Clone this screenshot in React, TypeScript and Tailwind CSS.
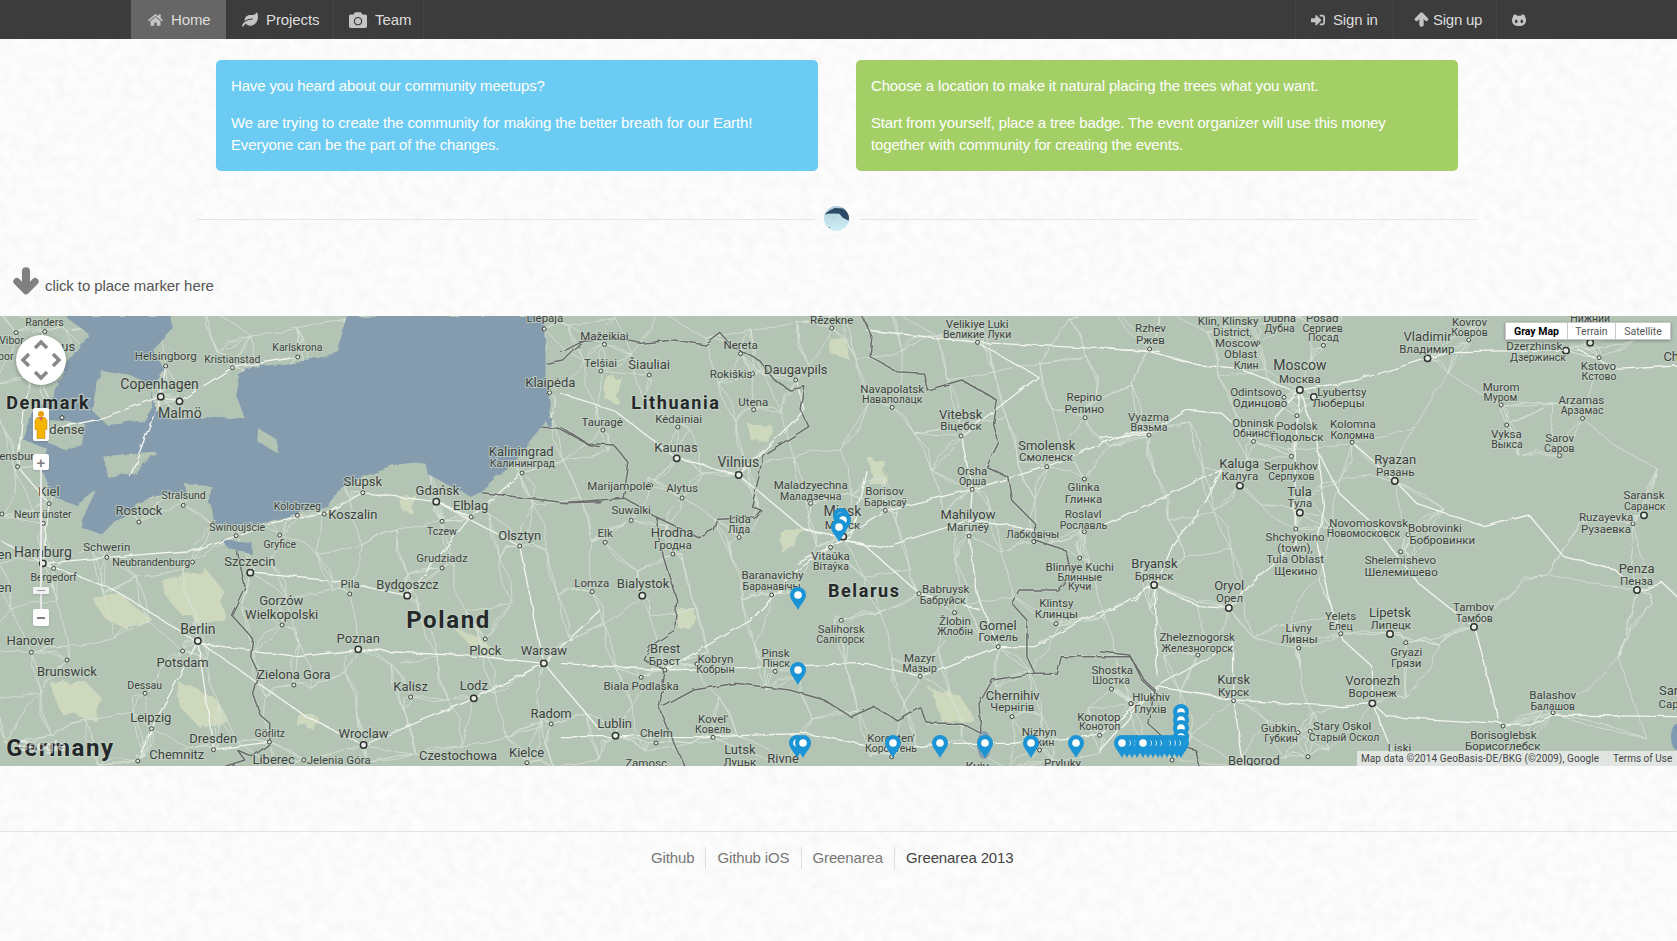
import { FaHome, FaLeaf, FaCamera, FaSignInAlt } from 'react-icons/fa';

type Crop = 'a' | 'b' | 'c';

// map data was read off three crops, so points are kept in crop coordinates
const OX: Record<Crop, number> = { a: 0, b: 560, c: 1100 };
const FX: Record<Crop, number> = { a: 2.613, b: 2.613, c: 2.717 };
const px = (c: Crop, x: number) => OX[c] + x / FX[c];
const py = (y: number) => 310 + y / 3;

const line = (c: Crop, p: number[], close = false) => {
  let d = '';
  for (let i = 0; i < p.length; i += 2) {
    d += `${i ? 'L' : 'M'}${px(c, p[i]).toFixed(1)} ${py(p[i + 1]).toFixed(1)}`;
  }
  return close ? d + 'Z' : d;
};

const A = 14;
const B = 13;
const C = 11.5;
const D = 10.5;

const LABELS: Record<Crop, [string, number, number, number][]> = {
  a: [
    ['Randers', 116, 36, D], ['Vibor', 30, 92, D], ['Aarhus', 143, 108, B], ['bor', 15, 138, D], ['Helsingborg', 433, 138, C],
    ['Karlskrona', 777, 113, D], ['Kristianstad', 607, 147, D], ['Copenhagen', 417, 222, A], ['Malmö', 470, 310, A], ['Odense', 163, 358, B],
    ['Klaipėda', 1438, 217, B], ['Liepaja', 1424, 25, C], ['Kaliningrad', 1362, 424, B], ['Калининград', 1365, 460, D], ['Slupsk', 948, 513, B],
    ['Gdańsk', 1143, 540, B], ['Elblag', 1230, 586, B], ['Koszalin', 922, 612, B], ['Kolobrzeg', 777, 588, D], ['Stralsund', 480, 557, D],
    ['Rostock', 363, 600, B], ['Kiel', 128, 545, B], ['Neumünster', 112, 612, D], ['Flensburg', 40, 438, C], ['Świnoujście', 620, 651, D],
    ['Gryfice', 731, 702, D], ['Tczew', 1155, 663, D], ['Olsztyn', 1358, 676, B], ['Grudziadz', 1155, 744, C], ['Schwerin', 279, 711, C],
    ['Neubrandenburg', 395, 756, D], ['Hamburg', 112, 725, A], ['Szczecin', 653, 753, B], ['Bergedorf', 140, 801, D], ['Pila', 915, 822, C],
    ['Bydgoszcz', 1065, 823, B], ['Gorzów', 735, 870, B], ['Wielkopolski', 736, 912, B], ['Hanover', 80, 991, B], ['Berlin', 517, 958, A],
    ['Poznan', 936, 985, B], ['Plock', 1268, 1020, B], ['Warsaw', 1421, 1021, B], ['Potsdam', 477, 1057, B], ['Brunswick', 175, 1083, B],
    ['Zielona Gora', 768, 1092, B], ['Dessau', 378, 1125, D], ['Kalisz', 1073, 1128, B], ['Lodz', 1238, 1127, B], ['Radom', 1440, 1210, B],
    ['Leipzig', 394, 1222, B], ['Dresden', 557, 1284, B], ['Görlitz', 705, 1270, D], ['Wroclaw', 950, 1270, B], ['Chemnitz', 462, 1332, B],
    ['Liberec', 715, 1348, B], ['Jelenia Góra', 885, 1349, C], ['Czestochowa', 1197, 1335, B], ['Kielce', 1376, 1327, B], ['en', 12, 732, B], ['en', 12, 832, B],
  ],
  b: [
    ['Rēzekne', 710, 30, C], ['Velikiye Luki', 1090, 42, C], ['Великие Луки', 1090, 72, D], ['Mažeikiai', 116, 77, C], ['Nereta', 472, 105, C],
    ['Telšiai', 106, 158, C], ['Šiauliai', 233, 162, B], ['Rokiškis', 447, 191, C], ['Daugavpils', 616, 178, B], ['Navapolatsk', 868, 237, C],
    ['Наваполацк', 868, 268, D], ['Utena', 505, 276, C], ['Repino', 1370, 262, C], ['Репино', 1370, 297, C], ['Kėdainiai', 310, 327, C],
    ['Tauragė', 110, 336, C], ['Vitebsk', 1047, 312, B], ['Віцебск', 1048, 348, C], ['Kaunas', 303, 412, B], ['Smolensk', 1272, 405, B],
    ['Смоленск', 1270, 441, C], ['Vilnius', 466, 457, A], ['Orsha', 1077, 483, C], ['Орша', 1078, 514, D], ['Maladzyechna', 655, 525, C],
    ['Маладзечна', 655, 558, D], ['Borisov', 848, 543, C], ['Барысаў', 850, 577, D], ['Glinka', 1368, 530, C], ['Глинка', 1368, 567, C],
    ['Marijampolė', 155, 528, C], ['Alytus', 319, 534, C], ['Suwalki', 186, 600, C], ['Minsk', 738, 604, A], ['Минск', 738, 645, C],
    ['Roslavl', 1367, 612, C], ['Рославль', 1368, 646, D], ['Mahilyow', 1066, 613, B], ['Магілёў', 1066, 651, C], ['Lida', 470, 627, C],
    ['Ліда', 468, 658, D], ['Elk', 118, 669, C], ['Hrodna', 293, 667, B], ['Гродна', 295, 705, C], ['Лабковічы', 1235, 672, D],
    ['Vitaŭka', 707, 738, C], ['Вітаўка', 708, 768, D], ['Blinnye Kuchi', 1358, 771, C], ['Блинные', 1358, 801, D], ['Кучи', 1358, 828, D],
    ['Baranavichy', 555, 796, C], ['Баранавічы', 553, 828, D], ['Lomza', 83, 820, C], ['Bialystok', 217, 820, B], ['Babruysk', 1008, 837, C],
    ['Бабруйск', 1000, 870, D], ['Klintsy', 1297, 879, C], ['Клинцы', 1297, 912, C], ['Žlobin', 1032, 932, C], ['Жлобін', 1032, 963, D],
    ['Gomel', 1144, 945, B], ['Гомель', 1145, 982, C], ['Salihorsk', 735, 957, C], ['Салігорск', 733, 988, D], ['Brest', 275, 1015, B],
    ['Брэст', 273, 1053, C], ['Kobryn', 406, 1047, C], ['Кобрын', 406, 1077, D], ['Pinsk', 563, 1028, C], ['Пінск', 565, 1060, D],
    ['Mazyr', 940, 1044, C], ['Мазыр', 940, 1075, D], ['Shostka', 1443, 1080, C], ['Шостка', 1440, 1112, D], ['Biala Podlaska', 212, 1128, C],
    ['Chernihiv', 1183, 1155, B], ['Чернігів', 1182, 1191, C], ["Kovel'", 400, 1227, C], ['Ковель', 400, 1257, D], ['Lublin', 143, 1240, B],
    ['Chelm', 252, 1270, C], ['Konotop', 1408, 1221, C], ['Конотоп', 1410, 1250, D], ['Nizhyn', 1252, 1266, C], ['Ніжин', 1252, 1296, D],
    ["Korosten'", 865, 1284, C], ['Коростень', 865, 1315, D], ['Lutsk', 470, 1318, B], ['Луцьк', 470, 1356, C], ['Rivne', 583, 1345, B],
    ['Zamosc', 225, 1358, C], ['Pryluky', 1313, 1358, C], ['Kyiv', 1090, 1368, B],
  ],
  c: [
    ['Rzhev', 137, 53, C], ['Ржев', 137, 90, C], ['Klin, Klinsky', 348, 33, C], ['District,', 360, 66, C], ['Moscow', 372, 99, C], ['Oblast', 382, 132, C],
    ['Клин', 397, 165, D], ['Dubna', 488, 25, C], ['Дубна', 488, 54, D], ['Posad', 604, 25, C], ['Сергиев', 605, 54, D], ['Посад', 607, 81, D],
    ['Kovrov', 1004, 36, C], ['Ковров', 1004, 67, D], ['Vladimir', 890, 78, B], ['Владимир', 888, 117, C], ['Moscow', 543, 166, A], ['Москва', 543, 207, C],
    ['Dzerzhinsk', 1180, 107, C], ['Дзержинск', 1190, 142, D], ['Kstovo', 1354, 168, C], ['Кстово', 1356, 198, D], ['Odintsovo', 424, 246, C],
    ['Одинцово', 435, 279, C], ['Lyubertsy', 657, 246, C], ['Люберцы', 648, 279, C], ['Murom', 1090, 231, C], ['Муром', 1088, 262, D],
    ['Arzamas', 1308, 271, C], ['Арзамас', 1310, 300, D], ['Vyazma', 132, 322, C], ['Вязьма', 133, 352, D], ['Obninsk', 416, 339, C],
    ['Обнинск', 418, 369, D], ['Podolsk', 535, 348, C], ['Подольск', 535, 381, C], ['Kolomna', 687, 342, C], ['Коломна', 686, 375, D],
    ['Vyksa', 1104, 372, C], ['Выкса', 1106, 402, D], ['Sarov', 1249, 384, C], ['Саров', 1248, 414, D], ['Ryazan', 802, 448, B], ['Рязань', 802, 487, C],
    ['Kaluga', 378, 460, B], ['Калуга', 380, 497, C], ['Serpukhov', 519, 468, C], ['Серпухов', 520, 498, D], ['Tula', 542, 543, B], ['Тула', 543, 579, C],
    ['Saransk', 1478, 555, C], ['Саранск', 1480, 589, D], ['Novomoskovsk', 730, 639, C], ['Новомосковск', 716, 670, D], ['Ruzayevka', 1375, 621, C],
    ['Рузаевка', 1375, 657, C], ['Bobrovinki', 910, 654, C], ['Бобровинки', 930, 690, C], ['Shchyokino', 530, 681, C], ['(town),', 530, 714, C],
    ['Tula Oblast', 530, 747, C], ['Щекино', 532, 783, C], ['Shelemishevo', 816, 750, C], ['Шелемишево', 818, 786, C], ['Penza', 1458, 775, B],
    ['Пенза', 1458, 814, C], ['Bryansk', 148, 760, B], ['Брянск', 147, 798, C], ['Oryol', 351, 826, B], ['Орел', 352, 864, C], ['Tambov', 1015, 890, C],
    ['Тамбов', 1017, 924, D], ['Yelets', 654, 918, C], ['Елец', 654, 948, D], ['Lipetsk', 788, 906, B], ['Липецк', 790, 945, C], ['Livny', 540, 954, C],
    ['Ливны', 541, 987, C], ['Zheleznogorsk', 264, 981, C], ['Железногорск', 264, 1015, D], ['Gryazi', 832, 1026, C], ['Грязи', 832, 1060, C],
    ['Kursk', 363, 1107, B], ['Курск', 363, 1147, C], ['Voronezh', 741, 1110, B], ['Воронеж', 741, 1150, C], ['Balashov', 1230, 1155, C],
    ['Балашов', 1230, 1188, D], ['Sar', 1545, 1140, B], ['Сар', 1545, 1182, C], ['Gubkin', 485, 1254, C], ['Губкин', 492, 1284, D], ['Stary Oskol', 658, 1248, C],
    ['Старый Оскол', 663, 1281, D], ['Borisoglebsk', 1096, 1275, C], ['Борисоглебск', 1094, 1308, C], ['Liski', 814, 1313, C], ['Belgorod', 418, 1350, B],
    ['Hlukhiv', 139, 1160, C], ['Глухів', 137, 1197, C], ['Нижний', 1332, 25, D], ['Ch', 1552, 138, B],
  ],
};

const COUNTRIES: [string, Crop, number, number, number][] = [
  ['Denmark', 'a', 126, 277, 18],
  ['Poland', 'a', 1172, 930, 24],
  ['Germany', 'a', 158, 1315, 24],
  ['Lithuania', 'b', 303, 277, 18],
  ['Belarus', 'b', 795, 842, 18],
];

// [x, y, big]
const DOTS: Record<Crop, [number, number, number?][]> = {
  a: [
    [420, 260, 1], [469, 274, 1], [112, 760, 1], [517, 993, 1], [654, 788, 1], [1140, 575, 1], [1421, 1060, 1], [1238, 1165, 1], [950, 1305, 1], [936, 1018, 1], [1064, 857, 1],
    [117, 65], [42, 68], [433, 168], [607, 173], [778, 141], [162, 323], [46, 470], [128, 581], [113, 640], [279, 742], [363, 636], [479, 586], [503, 756], [617, 677], [731, 675],
    [777, 616], [847, 612], [948, 548], [1155, 634], [1231, 621], [1364, 489], [1358, 708], [1155, 774], [914, 852], [737, 945], [140, 775], [82, 1027], [175, 1050], [477, 1023],
    [379, 1150], [396, 1256], [558, 1319], [704, 1296], [768, 1125], [1073, 1161], [1268, 987], [1440, 1242], [794, 1350], [1377, 1358], [1436, 248], [1422, 57], [360, 1353], [5, 612],
  ],
  b: [
    [467, 495, 1], [305, 445, 1], [740, 680, 1], [215, 857, 1], [145, 1277, 1],
    [116, 103], [107, 183], [233, 195], [472, 131], [503, 191], [616, 210], [710, 54], [1091, 97], [868, 292], [506, 299], [308, 351], [112, 360], [1372, 323], [1048, 378], [1272, 470],
    [1077, 538], [655, 580], [850, 601], [1370, 507], [237, 526], [319, 564], [186, 631], [118, 697], [468, 682], [295, 732], [1069, 678], [1370, 665], [1238, 695], [707, 712], [1358, 744],
    [553, 855], [84, 845], [938, 851], [1551, 826], [1031, 908], [735, 931], [1296, 941], [1145, 1010], [274, 1080], [358, 1062], [562, 1084], [941, 1099], [1441, 1137], [212, 1102],
    [1181, 1220], [1492, 1181], [400, 1282], [251, 1299], [1410, 1276], [1253, 1320], [867, 1340],
  ],
  c: [
    [543, 240, 1], [740, 1180, 1], [890, 145, 1], [801, 513, 1], [581, 261, 1], [1332, 98, 1], [1266, 122, 1], [380, 527, 1], [543, 608, 1], [147, 825, 1], [350, 894, 1], [1016, 951, 1], [788, 972, 1], [1478, 616, 1], [1459, 840, 1],
    [135, 117], [429, 98], [607, 106], [1002, 90], [1356, 143], [500, 262], [535, 317], [417, 394], [685, 397], [1090, 285], [1311, 325], [133, 375], [1105, 345], [1249, 437], [520, 439],
    [532, 657], [627, 654], [837, 674], [1448, 641], [817, 725], [654, 971], [831, 998], [540, 1014], [266, 1035], [363, 1172], [84, 1181], [1231, 1208], [1095, 1248], [538, 1268], [571, 1264], [565, 1340], [196, 1350],
  ],
};

const MAJOR_ROADS: [Crop, number[]][] = [
  ['a', [1421, 1060, 1260, 1040, 930, 1020, 780, 1040, 520, 1000, 300, 840, 112, 760, 0, 690]],
  ['a', [654, 788, 890, 815, 1064, 857, 1230, 620, 1140, 575, 948, 548, 847, 612, 700, 640, 520, 720, 279, 742, 112, 760]],
  ['a', [1421, 1060, 1240, 1165, 950, 1305, 800, 1220, 517, 993]],
  ['a', [1421, 1060, 1568, 900]],
  ['a', [1421, 1060, 1568, 1260]],
  ['a', [112, 760, 128, 581, 46, 470, 60, 300, 117, 65]],
  ['a', [120, 360, 250, 330, 420, 260, 469, 274, 607, 173, 778, 141]],
  ['a', [433, 168, 420, 260, 340, 500]],
  ['a', [517, 993, 396, 1256, 360, 1353]],
  ['a', [517, 993, 558, 1319, 704, 1296]],
  ['a', [1140, 575, 1358, 708, 1421, 1060]],
  ['a', [1364, 489, 1231, 621, 1140, 575]],
  ['b', [0, 250, 140, 300, 305, 445, 467, 495, 640, 660, 740, 680]],
  ['b', [467, 495, 640, 300, 616, 210]],
  ['b', [274, 1080, 500, 930, 620, 780, 735, 690, 790, 700, 940, 851, 1100, 900]],
  ['b', [740, 680, 850, 601, 1077, 538, 1272, 470, 1480, 370, 1568, 360]],
  ['b', [740, 690, 840, 715, 1069, 630, 1240, 660]],
  ['b', [1048, 378, 1077, 538, 1069, 678, 1090, 850, 1145, 1010]],
  ['b', [1145, 1010, 1240, 1010, 1380, 920, 1500, 870, 1568, 800]],
  ['b', [0, 1060, 274, 1080, 560, 1070, 800, 1060, 941, 1099, 1145, 1010]],
  ['b', [0, 1280, 400, 1280, 640, 1270, 870, 1320, 1000, 1300, 1181, 1300, 1410, 1276, 1568, 1130]],
  ['b', [1048, 378, 1250, 200, 1090, 97, 800, 60]],
  ['b', [1091, 97, 1568, 125]],
  ['b', [800, 480, 760, 680, 620, 760]],
  ['c', [0, 115, 135, 125, 270, 165, 380, 175, 520, 240]],
  ['c', [543, 240, 700, 210, 890, 145, 960, 125, 1270, 120]],
  ['c', [0, 385, 130, 370, 230, 300, 330, 310, 417, 394, 543, 240]],
  ['c', [543, 240, 590, 400, 610, 590, 590, 700, 620, 860, 660, 990, 740, 1070, 740, 1180]],
  ['c', [350, 894, 440, 790, 530, 700, 530, 440, 543, 240]],
  ['c', [0, 650, 330, 480, 290, 570, 200, 700, 150, 830, 155, 1100]],
  ['c', [590, 420, 650, 550, 740, 640, 865, 820, 1016, 951, 1085, 1230]],
  ['c', [685, 397, 800, 510, 860, 580, 1045, 650, 1165, 615, 1260, 740, 1400, 780, 1460, 840, 1530, 820, 1568, 860]],
  ['c', [363, 1170, 660, 1190, 740, 1180, 780, 1220, 1090, 1240, 1170, 1245, 1230, 1215, 1568, 1220]],
  ['c', [0, 920, 147, 825, 270, 890, 350, 894]],
  ['c', [1300, 120, 1400, 175, 1568, 165]],
  ['c', [155, 1130, 363, 1000, 363, 1170, 390, 1368]],
  ['c', [0, 1320, 155, 1130, 363, 1170]],
  ['c', [740, 1180, 810, 1368]],
];

const BORDERS: [Crop, number[]][] = [
  ['a', [620, 725, 640, 830, 605, 915, 660, 985, 655, 1040, 675, 1090, 660, 1150, 680, 1215, 705, 1240, 705, 1300, 660, 1340, 620, 1320, 640, 1350, 590, 1368]],
  ['a', [1260, 548, 1480, 578, 1568, 575]],
  ['b', [0, 578, 170, 565, 250, 620, 270, 740, 305, 870, 300, 960, 235, 1010, 220, 1050, 275, 1080, 260, 1190, 290, 1280, 325, 1368]],
  ['a', [1428, 160, 1470, 150, 1515, 100, 1568, 70]],
  ['b', [0, 125, 50, 95, 150, 85, 210, 100, 300, 90, 380, 105, 420, 70, 450, 110, 520, 150, 560, 210, 600, 240, 640, 230, 630, 300, 650, 350, 580, 400, 530, 435, 520, 500, 500, 590, 525, 600, 510, 620, 410, 625, 400, 660, 360, 680, 250, 620]],
  ['b', [0, 350, 70, 400, 140, 405, 180, 460, 165, 565]],
  ['a', [1415, 352, 1460, 355, 1540, 405, 1568, 410]],
  ['b', [790, 18, 815, 80, 810, 140, 880, 185, 950, 190, 960, 240, 1050, 210, 1140, 270, 1130, 340, 1145, 400, 1115, 470, 1170, 500, 1180, 570, 1240, 640, 1240, 690, 1320, 720, 1340, 790, 1300, 840, 1200, 840, 1180, 880, 1220, 930, 1220, 1040, 1240, 1090, 1300, 1090, 1310, 1040, 1400, 1040, 1490, 1040, 1520, 1110, 1568, 1160]],
  ['b', [270, 1190, 350, 1140, 460, 1120, 600, 1140, 690, 1170, 760, 1220, 820, 1190, 880, 1230, 940, 1190, 960, 1240, 1050, 1240, 1100, 1270, 1095, 1180, 1130, 1110, 1240, 1090]],
  ['c', [0, 1025, 80, 1035, 120, 1110, 150, 1140, 130, 1240, 180, 1290, 260, 1320, 270, 1368]],
];

const GREEN: [Crop, number[]][] = [
  ['a', [420, 810, 540, 780, 590, 850, 560, 900, 480, 920, 440, 870]],
  ['a', [490, 900, 570, 860, 590, 920, 530, 960]],
  ['a', [130, 1120, 220, 1110, 270, 1170, 250, 1230, 160, 1210]],
  ['a', [240, 860, 310, 850, 400, 930, 330, 960, 270, 920]],
  ['a', [470, 1120, 560, 1160, 600, 1240, 520, 1250, 470, 1190]],
  ['a', [1045, 560, 1085, 550, 1080, 610, 1050, 600]],
  ['a', [1190, 960, 1250, 980, 1310, 1040, 1250, 1030]],
  ['a', [780, 1210, 830, 1220, 820, 1260, 780, 1250]],
  ['b', [970, 1140, 1040, 1150, 1090, 1240, 1000, 1240]],
  ['b', [580, 650, 630, 650, 620, 720, 580, 730]],
  ['b', [700, 80, 755, 90, 750, 140, 705, 130]],
  ['b', [490, 340, 550, 340, 545, 400, 500, 390]],
  ['b', [810, 450, 845, 450, 850, 520, 815, 530]],
  ['b', [310, 900, 355, 900, 350, 950, 310, 960]],
  ['b', [120, 210, 160, 200, 150, 280, 120, 270]],
];

const WATER = line('a', [170, 18, 450, 18, 455, 55, 400, 120, 430, 180, 395, 240, 400, 285, 450, 330, 560, 320, 640, 325, 615, 250, 625, 195, 680, 165, 820, 150, 880, 120, 910, 18, 1420, 18, 1428, 100, 1428, 200, 1440, 320, 1415, 350, 1330, 470, 1260, 545, 1230, 560, 1180, 530, 1115, 490, 1110, 460, 1040, 465, 960, 495, 880, 540, 860, 590, 790, 610, 700, 640, 640, 650, 555, 640, 555, 590, 530, 560, 470, 545, 380, 565, 300, 640, 270, 675, 210, 650, 230, 600, 255, 540, 200, 585, 140, 560, 110, 480, 120, 410, 60, 390, 90, 300, 140, 260, 170, 170, 230, 70], true);

const ISLANDS = [
  [265, 180, 340, 195, 395, 225, 395, 290, 370, 335, 280, 345, 240, 300, 250, 240],
  [270, 440, 340, 430, 410, 425, 350, 490, 280, 500],
  [675, 355, 720, 385, 722, 425, 672, 395],
  [480, 520, 550, 525, 545, 590, 490, 570],
  [130, 330, 220, 340, 215, 400, 170, 420, 125, 400],
];

const LAKES = [
  [580, 690, 660, 700, 660, 735, 600, 720],
  [1420, 320, 1450, 330, 1440, 360],
];

// heads of the markers in page coordinates, later ones on top
const PINS: [number, number][] = [
  [1181, 712], [1181, 720], [1181, 728], [1181, 737],
  [841, 516], [843, 520], [839, 527], [798, 595], [798, 670],
  [797, 743], [803, 743], [893, 743], [940, 743], [985, 743], [1031, 743], [1076, 743],
  [1181, 743], [1177, 743], [1172, 743], [1167, 743], [1162, 743], [1158, 743], [1153, 743], [1148, 743], [1137, 743], [1132, 743], [1127, 743], [1122, 743], [1143, 743],
];

// thin roads: every node is joined to its nearest neighbours; the grid fills the land between the cities
const cityNodes = (Object.keys(DOTS) as Crop[]).flatMap((c) => DOTS[c].map((d) => [px(c, d[0]), py(d[1])]));
const gridNodes: number[][] = [];
for (let gx = 0; gx < 34; gx++) {
  for (let gy = 0; gy < 10; gy++) {
    if (gx > 26 && (gx + gy) % 3) continue;
    gridNodes.push([gx * 50 + ((gx * 37 + gy * 53) % 41) - 20, 320 + gy * 48 + ((gx * 29 + gy * 71) % 37) - 18]);
  }
}
const allNodes = [...cityNodes, ...gridNodes];
const minorRoads = allNodes
  .flatMap((d, i) => {
    const near = allNodes
      .map((o, j) => ({ j, o, dist: Math.hypot(o[0] - d[0], o[1] - d[1]) }))
      .filter((n) => n.j !== i)
      .sort((x, y) => x.dist - y.dist)
      .slice(0, 3);
    return near.map((n, k) => {
      const mx = (d[0] + n.o[0]) / 2 + ((i * 7 + k * 5) % 13) - 6;
      const my = (d[1] + n.o[1]) / 2 + ((i * 11 + k * 3) % 11) - 5;
      return `M${d[0].toFixed(1)} ${d[1].toFixed(1)}L${mx.toFixed(1)} ${my.toFixed(1)}L${n.o[0].toFixed(1)} ${n.o[1].toFixed(1)}`;
    });
  })
  .join('');

const MapCanvas = () => (
  <svg viewBox="0 316 1677 450" className="block h-full w-full" style={{ fontFamily: 'Roboto, sans-serif' }}>
    <defs>
      <filter id="rough-land" x="-5%" y="-5%" width="110%" height="110%">
        <feTurbulence type="fractalNoise" baseFrequency="0.06" numOctaves="3" seed="4" />
        <feDisplacementMap in="SourceGraphic" scale="14" />
      </filter>
      <filter id="rough-coast" x="-5%" y="-5%" width="110%" height="110%">
        <feTurbulence type="fractalNoise" baseFrequency="0.05" numOctaves="3" seed="9" />
        <feDisplacementMap in="SourceGraphic" scale="7" />
      </filter>
      <filter id="rough-line" x="-5%" y="-5%" width="110%" height="110%">
        <feTurbulence type="fractalNoise" baseFrequency="0.07" numOctaves="2" seed="2" />
        <feDisplacementMap in="SourceGraphic" scale="5" />
      </filter>
    </defs>
    <rect x="0" y="316" width="1677" height="450" fill="#b3c4b5" />
    <g filter="url(#rough-land)">
      {GREEN.map(([c, p], i) => (
        <path key={i} d={line(c, p, true)} fill="#cdd8bd" />
      ))}
    </g>
    <path d={minorRoads} fill="none" stroke="#d8e1d6" strokeWidth="0.8" filter="url(#rough-line)" />
    <g filter="url(#rough-coast)">
      <path d={WATER} fill="#849cae" />
      {ISLANDS.map((p, i) => (
        <path key={i} d={line('a', p, true)} fill="#b3c4b5" />
      ))}
      {LAKES.map((p, i) => (
        <path key={i} d={line('a', p, true)} fill="#849cae" />
      ))}
    </g>
    <ellipse cx="1677" cy="737" rx="6" ry="13" fill="#7e9ab3" />
    <ellipse cx="984" cy="745" rx="7" ry="14" fill="#849cae" />
    <g filter="url(#rough-line)" fill="none" strokeLinejoin="round">
      {MAJOR_ROADS.map(([c, p], i) => (
        <path key={i} d={line(c, p)} stroke="#f3f5f0" strokeWidth="1.3" />
      ))}
      {BORDERS.map(([c, p], i) => (
        <path key={i} d={line(c, p)} stroke="#d6ded4" strokeWidth="3.2" opacity="0.5" />
      ))}
      {BORDERS.map(([c, p], i) => (
        <path key={i} d={line(c, p)} stroke="#686d6b" strokeWidth="1.5" />
      ))}
    </g>
    {(Object.keys(DOTS) as Crop[]).flatMap((c) =>
      DOTS[c].map((d, i) => (
        <circle
          key={c + i}
          cx={px(c, d[0])}
          cy={py(d[1])}
          r={d[2] ? 3.2 : 2}
          fill={d[2] ? '#e8ede6' : '#dfe6dd'}
          stroke="#2f3331"
          strokeWidth={d[2] ? 1.5 : 0.9}
        />
      )),
    )}
    {(Object.keys(LABELS) as Crop[]).flatMap((c) =>
      LABELS[c].map(([t, x, y, s], i) => (
        <text
          key={c + i}
          x={px(c, x)}
          y={py(y)}
          fontSize={s}
          textAnchor="middle"
          dominantBaseline="central"
          fill="#3d4240"
          stroke="#c6d3c6"
          strokeOpacity="0.75"
          strokeWidth="2"
          paintOrder="stroke"
        >
          {t}
        </text>
      )),
    )}
    {COUNTRIES.map(([t, c, x, y, s]) => (
      <text
        key={t}
        x={px(c, x)}
        y={py(y)}
        fontSize={s}
        fontWeight="700"
        letterSpacing="1.6"
        textAnchor="middle"
        dominantBaseline="central"
        fill="#25282a"
        stroke="#c6d3c6"
        strokeOpacity="0.75"
        strokeWidth="2.4"
        paintOrder="stroke"
      >
        {t}
      </text>
    ))}
    <text x="18" y="751" fontSize="15" fontWeight="700" fill="#ffffff" opacity="0.55">
      Google
    </text>
    {PINS.map(([x, y], i) => (
      <g key={i} transform={`translate(${x} ${y})`}>
        <path d="M0 15C-2.5 9.500-8 5-8 0A8 8 0 1 1 8 0C8 5 2.500 9.500 0 15Z" fill="#1b94d5" />
        <circle r="3.800" fill="#ffffff" />
      </g>
    ))}
  </svg>
);

const Globe = () => (
  <svg viewBox="0 0 26 26" className="h-[26px] w-[26px] -translate-x-[0.5px] -translate-y-[0.5px]">
    <defs>
      <linearGradient id="globe-sea" x1="0" y1="0" x2="0" y2="1">
        <stop offset="0" stopColor="#a9cbdc" />
        <stop offset="1" stopColor="#d2eff6" />
      </linearGradient>
      <clipPath id="globe-disc">
        <circle cx="13" cy="13" r="12.500" />
      </clipPath>
    </defs>
    <circle cx="13" cy="13" r="12.500" fill="url(#globe-sea)" />
    <path clipPath="url(#globe-disc)" d="M2.500 7.500L6 5l5.300-2.500 8.400.5 3 2.500 3 4.200 0 5.600-3-1.300-3.400-1.800-3.400-4-6.600-.3-5 .3-3 1Z" fill="#2b4a66" />
    <circle cx="6" cy="22" r="0.600" fill="#2b4a66" />
    <circle cx="10" cy="12" r="0.400" fill="#5a7a90" />
  </svg>
);

// thick rounded arrow, as the page's icon font draws it
const ThickArrow = ({ className, up }: { className: string; up?: boolean }) => (
  <svg viewBox="0 0 26 26" className={className} fill="none" stroke="currentColor" strokeLinecap="round" strokeLinejoin="round">
    <g transform={up ? 'rotate(180 13 13)' : undefined}>
      <path d="M13 4v16" strokeWidth="7.500" />
      <path d="M4.500 13.500L13 22l8.500-8.500" strokeWidth="6.500" />
    </g>
  </svg>
);

const GithubCat = ({ className }: { className: string }) => (
  <svg viewBox="0 0 14 12" className={className}>
    <path d="M1 1.500L3.800.3 5 1.800h4L10.200.3 13 1.500V3c.8 1 1 2 1 3 0 4-2.500 6-7 6S0 10 0 6c0-1 .2-2 1-3Z" fill="currentColor" />
    <ellipse cx="4.200" cy="7.400" rx="1.300" ry="1.800" fill="#3c3c3c" />
    <ellipse cx="9.800" cy="7.400" rx="1.300" ry="1.800" fill="#3c3c3c" />
  </svg>
);

const navItem = 'flex h-full items-center text-[15px] tracking-[-0.1px] text-[#dddddd]';
const navIcon = 'shrink-0 text-[#c4c4c4]';

export default function App() {
  return (
    <div className="relative min-h-[941px] overflow-hidden bg-[#fdfdfd] font-['Liberation_Sans',Arial,sans-serif] text-[15px] leading-[22px]">
      {/* Paper texture behind the page */}
      <svg className="pointer-events-none absolute inset-0 h-full w-full">
        <filter id="paper">
          <feTurbulence type="fractalNoise" baseFrequency="0.09" numOctaves="4" seed="7" />
          <feColorMatrix values="0 0 0 0 0.45  0 0 0 0 0.45  0 0 0 0 0.45  0.16 0 0 0 -0.05" />
        </filter>
        <rect width="100%" height="100%" filter="url(#paper)" />
      </svg>

      <div className="relative">
        {/* Top bar */}
        <nav className="flex h-[39px] items-center bg-[#3c3c3c] pl-[131px] pr-[136px]">
          <a className={`${navItem} w-[95px] gap-[8px] bg-[#666666] pl-[17px]`}>
            <FaHome className={`${navIcon} h-[14px] w-[15px]`} />
            Home
          </a>
          <a className={`${navItem} w-[108px] gap-[8px] border-r border-[#464646] pl-[16px]`}>
            <FaLeaf className={`${navIcon} h-[15px] w-[16px]`} />
            Projects
          </a>
          <a className={`${navItem} w-[90px] gap-[8px] border-r border-[#464646] pl-[15px]`}>
            <FaCamera className={`${navIcon} h-[18px] w-[18px]`} />
            Team
          </a>
          <a className={`${navItem} ml-auto w-[98px] gap-[8px] border-l border-[#464646] pl-[15px] tracking-[-0.15px]`}>
            <FaSignInAlt className={`${navIcon} h-[14px] w-[14px]`} />
            Sign in
          </a>
          <a className={`${navItem} w-[103px] gap-[4px] border-l border-[#464646] pl-[20px] tracking-[-0.25px]`}>
            <ThickArrow up className={`${navIcon} h-[15px] w-[15px]`} />
            Sign up
          </a>
          <a className={`${navItem} w-[45px] border-l border-[#464646] pl-[15px]`}>
            <GithubCat className={`${navIcon} h-[12px] w-[14px]`} />
          </a>
        </nav>

        <div className="ml-[197px] w-[1280px]">
          {/* Intro cards */}
          <div className="mt-[21px] flex gap-[38px] px-[19px] tracking-[-0.15px] text-white">
            <div className="h-[111px] w-[602px] rounded-[5px] bg-[#6bcbf3] p-[15px]">
              <p className="mb-[15px]">Have you heard about our community meetups?</p>
              <p>We are trying to create the community for making the better breath for our Earth! Everyone can be the part of the changes.</p>
            </div>
            <div className="h-[111px] w-[602px] rounded-[5px] bg-[#a3cf66] p-[15px]">
              <p className="mb-[15px]">Choose a location to make it natural placing the trees what you want.</p>
              <p>Start from yourself, place a tree badge. The event organizer will use this money together with community for creating the events.</p>
            </div>
          </div>

          {/* Divider with the globe */}
          <div className="mt-[35px] flex h-[26px] items-center">
            <div className="h-px flex-1 bg-[#e3e3e3]" />
            <div className="flex w-[45px] justify-center">
              <Globe />
            </div>
            <div className="h-px flex-1 bg-[#e3e3e3]" />
          </div>
        </div>

        <div className="mt-[35px] flex h-[28px] items-end pl-[12px] tracking-[-0.08px] text-[#555555]">
          <ThickArrow className="h-[28px] w-[28px] text-[#808080]" />
          <span className="ml-[5px] translate-y-[2px]">click to place marker here</span>
        </div>

        {/* Map */}
        <div className="relative mt-[21px] h-[450px] overflow-hidden bg-[#b3c4b5]">
          <MapCanvas />

          <div className="absolute left-[16px] top-[19px] h-[50px] w-[50px] rounded-full bg-white shadow-[0_1px_4px_rgba(0,0,0,0.35)]">
            <svg viewBox="0 0 50 50" className="h-full w-full" fill="none" stroke="#888888" strokeWidth="3.500">
              <path d="M19 13l6-6 6 6M13 19l-6 6 6 6M37 19l6 6-6 6M19 37l6 6 6-6" />
            </svg>
          </div>
          <div className="absolute left-[33px] top-[92px] flex h-[33px] w-[16px] items-center justify-center rounded-[2px] bg-white shadow-sm">
            <svg viewBox="0 0 14 29" className="h-[29px] w-[14px]">
              <circle cx="7" cy="4" r="3" fill="#e8a010" />
              <path d="M3 7.500h8l2 3v9h-2v9H3v-9H1v-9Z" fill="#f5b400" stroke="#b97f00" strokeWidth="0.500" />
              <path d="M4.500 7.500h5L7 11Z" fill="#e2665a" />
            </svg>
          </div>
          <div className="absolute left-[33px] top-[138px] flex h-[16px] w-[16px] items-center justify-center rounded-[2px] bg-white text-[15px] font-bold leading-none text-[#808080] shadow-sm">
            +
          </div>
          <div className="absolute left-[40px] top-[154px] h-[140px] w-[2px] bg-[#e8e8e8]" />
          <div className="absolute left-[33px] top-[271px] flex h-[7px] w-[16px] items-center justify-center rounded-[1px] bg-[#f2f2f2] shadow-sm">
            <div className="h-px w-[8px] bg-[#9a9a9a]" />
          </div>
          <div className="absolute left-[33px] top-[293px] flex h-[17px] w-[16px] items-center justify-center rounded-[2px] bg-white shadow-sm">
            <div className="h-[2px] w-[8px] bg-[#808080]" />
          </div>

          <div className="absolute left-[1505px] top-[6px] flex h-[18px] font-['Roboto',sans-serif] text-[10.5px] leading-[17px] text-[#565656] shadow-[0_1px_3px_rgba(0,0,0,0.3)]">
            <div className="w-[63px] border border-[#c8c8c8] bg-white text-center font-bold text-black">Gray Map</div>
            <div className="w-[48px] border-y border-r border-[#c8c8c8] bg-white text-center">Terrain</div>
            <div className="w-[55px] border-y border-r border-[#c8c8c8] bg-white text-center">Satellite</div>
          </div>

          <div className="absolute bottom-0 right-0 flex h-[15px] w-[320px] items-center bg-[#f5f5f5]/70 pl-[4px] font-['Roboto',sans-serif] text-[10px] tracking-[0.1px] text-[#444444]">
            <span className="w-[247px]">Map data ©2014 GeoBasis-DE/BKG (©2009), Google</span>
            <span className="h-full border-l border-[#dddddd] pl-[4px] leading-[15px] tracking-normal">Terms of Use</span>
          </div>
        </div>

        {/* Footer */}
        <footer className="mt-[65px] border-t border-[#e3e3e3] pl-[640px] pt-[15px]">
          <ul className="flex items-center tracking-[-0.13px] text-[#777777]">
            <li className="border-r border-[#dddddd] px-[11px]">Github</li>
            <li className="border-r border-[#dddddd] px-[11px]">Github iOS</li>
            <li className="border-r border-[#dddddd] px-[11px]">Greenarea</li>
            <li className="px-[11px] text-[#444444]">Greenarea 2013</li>
          </ul>
        </footer>
      </div>
    </div>
  );
}
